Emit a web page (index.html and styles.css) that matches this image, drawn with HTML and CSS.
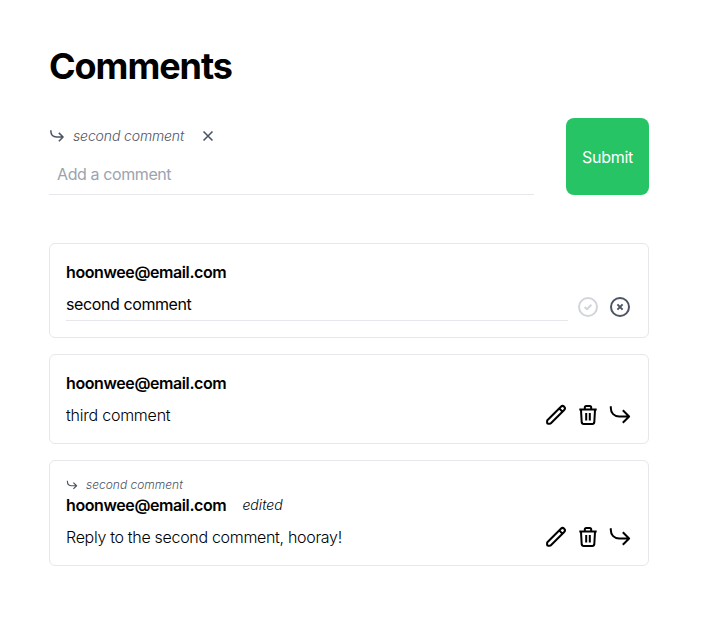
FILE: index.html
```html
<!DOCTYPE html>
<html lang="en">
<head>
<meta charset="utf-8">
<title>Comments</title>
<link rel="stylesheet" href="styles.css">
</head>
<body>
<svg class="defs" aria-hidden="true">
  <symbol id="reply" viewBox="0 0 24 24"><path d="M2.8 3.3V5C2.8 10 6.2 13.5 11.2 13.5H21M14.8 7.3l6.3 6.2-6.3 6.3"/></symbol>
  <symbol id="pencil" viewBox="0 0 24 24"><path d="M3.1 18.2c0-.5.2-.9.5-1.2L16.9 3.7a2.3 2.3 0 0 1 3.3 3.3L6.9 20.3c-.3.3-.7.5-1.2.5H4.1a1 1 0 0 1-1-1ZM15.2 5.4l3.3 3.3"/></symbol>
  <symbol id="trash" viewBox="0 0 24 24"><path d="M3.3 6.6h17.4M8.8 6.5V4.5A1.5 1.5 0 0 1 10.3 3h3.4a1.5 1.5 0 0 1 1.5 1.5v2M5 7l.7 12.2A2 2 0 0 0 7.7 21h8.6a2 2 0 0 0 2-1.8L19 7M10.2 10v7.5M13.8 10v7.5"/></symbol>
  <symbol id="confirm" viewBox="0 0 24 24"><circle cx="12" cy="12" r="9"/><path d="m8.6 12 2.4 2.2 4.4-4.4"/></symbol>
  <symbol id="cancel" viewBox="0 0 24 24"><circle cx="12" cy="12" r="9"/><path d="m9.4 9.4 5.2 5.2m0-5.2-5.2 5.2"/></symbol>
  <symbol id="close" viewBox="0 0 24 24"><path d="m5.3 5.3 13.4 13.4M18.7 5.3 5.3 18.7"/></symbol>
</svg>
<main>
  <h1>Comments</h1>
  <form class="composer">
    <div class="fields">
      <div class="target">
        <svg class="icon small"><use href="#reply"/></svg>
        <span class="target-text">second comment</span>
        <svg class="icon close"><use href="#close"/></svg>
      </div>
      <input class="new-comment" placeholder="Add a comment">
    </div>
    <button class="submit" type="button">Submit</button>
  </form>
  <section class="list">
    <article class="card">
      <div class="author"><b>hoonwee@email.com</b></div>
      <div class="row">
        <input class="edit" value="second comment">
        <svg class="icon disabled"><use href="#confirm"/></svg>
        <svg class="icon slate"><use href="#cancel"/></svg>
      </div>
    </article>
    <article class="card">
      <div class="author"><b>hoonwee@email.com</b></div>
      <div class="row">
        <p class="short">third comment</p>
        <svg class="icon"><use href="#pencil"/></svg>
        <svg class="icon"><use href="#trash"/></svg>
        <svg class="icon"><use href="#reply"/></svg>
      </div>
    </article>
    <article class="card">
      <div class="parent">
        <svg class="icon tiny"><use href="#reply"/></svg>
        <span>second comment</span>
      </div>
      <div class="author"><b>hoonwee@email.com</b><em>edited</em></div>
      <div class="row">
        <p>Reply to the second comment, hooray!</p>
        <svg class="icon"><use href="#pencil"/></svg>
        <svg class="icon"><use href="#trash"/></svg>
        <svg class="icon"><use href="#reply"/></svg>
      </div>
    </article>
  </section>
</main>
</body>
</html>
```
FILE: styles.css
```css
* { box-sizing: border-box; margin: 0; padding: 0; }
body { background: #fff; color: #000; font: 16px/24px Inter, "Liberation Sans", sans-serif; letter-spacing: -0.4px; }
.defs { display: none; }
main { width: 600px; margin: 46px 0 0 49px; }
h1 { font-size: 36px; line-height: 40px; font-weight: 700; letter-spacing: -1.05px; }
input, button { border: 0; outline: 0; background: none; font: inherit; letter-spacing: inherit; color: inherit; }
.icon { width: 24px; height: 24px; flex: none; fill: none; stroke: currentColor; stroke-width: 2; stroke-linejoin: round; }
.small { width: 16px; height: 16px; stroke-width: 2.3; }
.tiny { width: 12px; height: 12px; stroke-width: 2.3; }
.close { width: 16px; height: 16px; margin-left: 8px; stroke-width: 2.4; }
.disabled { color: #d1d5db; }
.slate { color: #4b5563; }
.composer { display: flex; gap: 32px; margin-top: 32px; height: 77px; }
.fields { flex: 1; display: flex; flex-direction: column; }
.target { height: 36px; display: flex; align-items: center; gap: 8px; color: #4b5563; }
.target-text { font-size: 14px; font-style: italic; font-weight: 300; letter-spacing: -0.13px; }
.new-comment { height: 41px; padding: 8px; border-bottom: 1px solid #e5e7eb; }
.new-comment::placeholder { color: #9ca3af; opacity: 1; }
.submit { width: 83px; border-radius: 8px; background: #27c466; color: #fff; letter-spacing: -0.3px; }
.list { display: flex; flex-direction: column; gap: 16px; margin-top: 48px; }
.card { padding: 16px; border: 1px solid #e5e7eb; border-radius: 6px; }
.author { display: flex; gap: 16px; height: 24px; }
.author b { font-weight: 600; }
.author em { font-size: 14px; font-weight: 300; letter-spacing: 0.05px; }
.row { display: flex; align-items: center; gap: 8px; margin-top: 8px; }
.row p { flex: 1; font-weight: 300; letter-spacing: -0.31px; }
.row .short { letter-spacing: -0.23px; }
.edit { flex: 1; min-width: 0; height: 29px; padding-bottom: 4px; border-bottom: 1px solid #e5e7eb; }
.parent { display: flex; align-items: center; gap: 8px; height: 16px; color: #4b5563; font-size: 12px; line-height: 16px; font-style: italic; font-weight: 300; letter-spacing: 0; }
```
